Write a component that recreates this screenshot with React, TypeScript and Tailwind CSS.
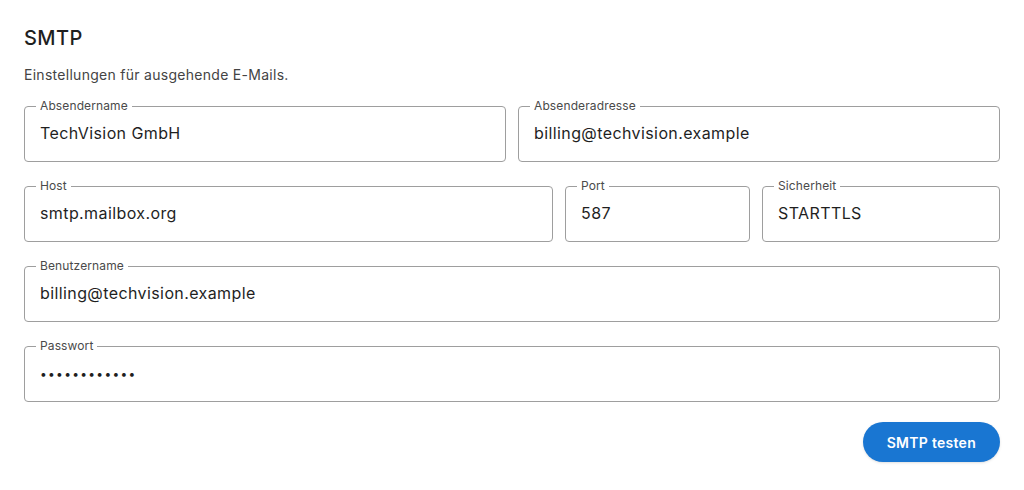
import { useState } from 'react'

type FieldProps = {
  label: string
  value: string
  type?: string
}

function Field({ label, value, type = 'text' }: FieldProps) {
  const secret = type === 'password'
  return (
    <fieldset className="min-w-0 rounded-[4px] border border-[#9e9e9e] px-[11px] pb-[7px]">
      <legend className="px-[4px] text-[12px] leading-[12px] tracking-[0.01em] text-[#4a4a4a]">{label}</legend>
      <input
        type={type}
        readOnly
        value={value}
        className={
          secret
            ? 'block h-[42px] w-full bg-transparent px-[4px] text-[12px] tracking-[1.3px] text-[#1f1f1f] outline-none'
            : 'block h-[42px] w-full bg-transparent px-[4px] text-[16px] tracking-[0.025em] text-[#1f1f1f] outline-none'
        }
      />
    </fieldset>
  )
}

export default function App() {
  const [testing, setTesting] = useState(false)

  return (
    <div className="min-h-screen bg-white px-6 pt-6 font-['Inter',sans-serif]">
      <h1 className="mb-[13px] text-[20px] leading-[28px] font-medium tracking-[0.02em] text-[#1f1f1f]">SMTP</h1>
      <p className="mb-[15px] text-[14px] leading-[20px] tracking-[0.02em] text-[#444]">
        Einstellungen für ausgehende E-Mails.
      </p>

      <div className="flex flex-col gap-[18px]">
        <div className="grid grid-cols-2 gap-[12px]">
          <Field label="Absendername" value="TechVision GmbH" />
          <Field label="Absenderadresse" value="billing@techvision.example" />
        </div>
        <div className="grid grid-cols-[1fr_185px_238px] gap-[12px]">
          <Field label="Host" value="smtp.mailbox.org" />
          <Field label="Port" value="587" />
          <Field label="Sicherheit" value="STARTTLS" />
        </div>
        <Field label="Benutzername" value="billing@techvision.example" />
        <Field label="Passwort" value="supersecret1" type="password" />
      </div>

      <div className="mt-[20px] flex justify-end">
        <button
          onClick={() => setTesting(!testing)}
          className="h-[40px] rounded-full bg-[#1976d2] px-[24px] text-[14px] font-semibold tracking-[0.02em] text-white shadow-sm"
        >
          SMTP testen
        </button>
      </div>
    </div>
  )
}
